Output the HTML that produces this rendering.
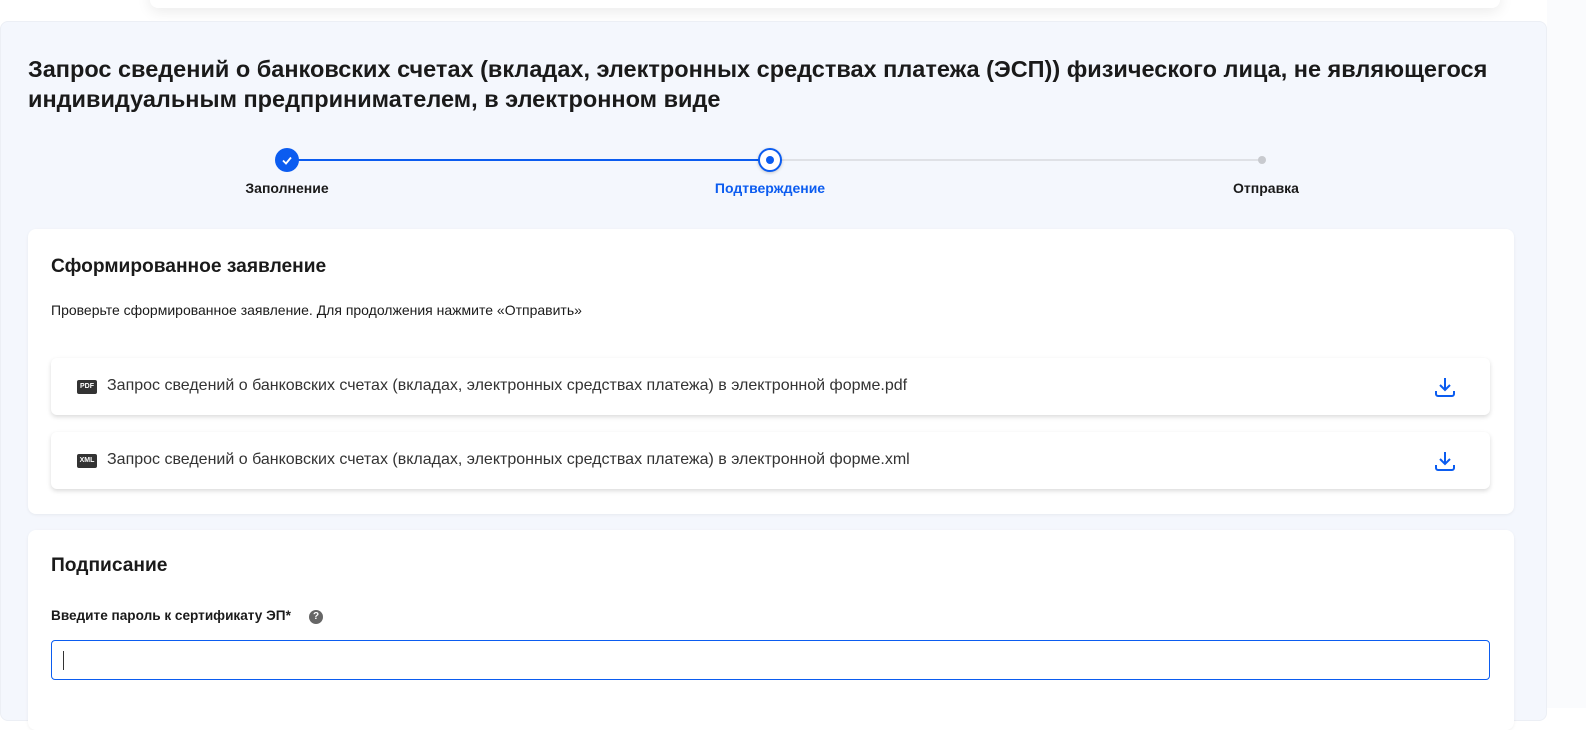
<!DOCTYPE html>
<html><head><meta charset="utf-8"><style>
*{box-sizing:border-box;margin:0;padding:0}
body{width:1586px;height:708px;overflow:hidden;background:#fff;font-family:"Liberation Sans",sans-serif;color:#1a1a1a;position:relative}
.topbar{position:absolute;left:150px;top:-20px;width:1350px;height:28px;background:#fff;box-shadow:0 4px 14px rgba(0,0,0,.08);border-radius:8px}
.panel{position:absolute;left:0;top:21px;width:1547px;height:700px;background:#f4f7fd;border-radius:8px;border:1px solid #eceff5}
.right{position:absolute;left:1547px;top:0;width:39px;height:708px;background:#fafbfd}
h1{position:absolute;left:28px;top:54px;font-size:23.5px;line-height:30px;font-weight:bold;color:#1a1a1a;width:1510px}
.line{position:absolute;top:159px;height:2px}
.lbl{position:absolute;top:180px;font-size:14px;font-weight:bold;transform:translateX(-50%);white-space:nowrap}
.card{position:absolute;left:28px;width:1486px;background:#fff;border-radius:8px;box-shadow:0 1px 3px rgba(0,0,0,.06)}
.card h2{position:absolute;left:23px;font-size:19.2px;font-weight:bold}
.file{position:absolute;left:23px;width:1439px;height:57px;background:#fff;border-radius:6px;box-shadow:0 2px 5px rgba(0,0,0,.15)}
.file .ic{position:absolute;left:26px;top:22px;width:20px;height:14px;background:#333;border-radius:2px;color:#fff;font-size:7px;font-weight:bold;text-align:center;line-height:14px}
.file .t{position:absolute;left:56px;top:19px;font-size:16px;color:#333}
.file svg{position:absolute;left:1382px;top:17px}
</style></head><body>
<div class="topbar"></div>
<div class="right"></div>
<div class="panel"></div>
<h1>Запрос сведений о банковских счетах (вкладах, электронных средствах платежа (ЭСП)) физического лица, не являющегося индивидуальным предпринимателем, в электронном виде</h1>
<div class="line" style="left:287px;width:483px;background:#0b5cf0"></div>
<div class="line" style="left:770px;width:492px;background:#dfe1e6"></div>
<div style="position:absolute;left:275px;top:148px;width:24px;height:24px;border-radius:50%;background:#0b5cf0"><svg width="24" height="24"><path d="M8 12.5l3 3 5-6" stroke="#fff" stroke-width="1.8" fill="none"/></svg></div>
<div style="position:absolute;left:758px;top:148px;width:24px;height:24px;border-radius:50%;background:#fff;border:2px solid #0b5cf0;box-shadow:0 1px 3px rgba(0,0,0,.2)"><div style="position:absolute;left:6px;top:6px;width:8px;height:8px;border-radius:50%;background:#0b5cf0"></div></div>
<div style="position:absolute;left:1258px;top:156px;width:8px;height:8px;border-radius:50%;background:#c8cacf"></div>
<div class="lbl" style="left:287px">Заполнение</div>
<div class="lbl" style="left:770px;color:#0b5cf0">Подтверждение</div>
<div class="lbl" style="left:1266px">Отправка</div>

<div class="card" style="top:229px;height:285px">
<h2 style="top:27px">Сформированное заявление</h2>
<div style="position:absolute;left:23px;top:73px;font-size:14px">Проверьте сформированное заявление. Для продолжения нажмите «Отправить»</div>
<div class="file" style="top:129px"><div class="ic">PDF</div><div class="t">Запрос сведений о банковских счетах (вкладах, электронных средствах платежа) в электронной форме.pdf</div>
<svg width="24" height="24" viewBox="0 0 24 24" fill="none" stroke="#0b5cf0" stroke-width="2"><path d="M12 3v12M7 10l5 5 5-5M3 16v3a2 2 0 0 0 2 2h14a2 2 0 0 0 2-2v-3"/></svg></div>
<div class="file" style="top:203px"><div class="ic">XML</div><div class="t">Запрос сведений о банковских счетах (вкладах, электронных средствах платежа) в электронной форме.xml</div>
<svg width="24" height="24" viewBox="0 0 24 24" fill="none" stroke="#0b5cf0" stroke-width="2"><path d="M12 3v12M7 10l5 5 5-5M3 16v3a2 2 0 0 0 2 2h14a2 2 0 0 0 2-2v-3"/></svg></div>
</div>

<div class="card" style="top:530px;height:200px">
<h2 style="top:25px">Подписание</h2>
<div style="position:absolute;left:23px;top:78px;font-size:13.6px;font-weight:bold">Введите пароль к сертификату ЭП*</div>
<div style="position:absolute;left:281px;top:80px;width:14px;height:14px;border-radius:50%;background:#666;color:#fff;font-size:10px;font-weight:bold;text-align:center;line-height:14px">?</div>
<div style="position:absolute;left:23px;top:110px;width:1439px;height:40px;border:1px solid #0b5cf0;border-radius:4px"><div style="position:absolute;left:11px;top:10px;width:1px;height:19px;background:#333"></div></div>
</div>
</body></html>
